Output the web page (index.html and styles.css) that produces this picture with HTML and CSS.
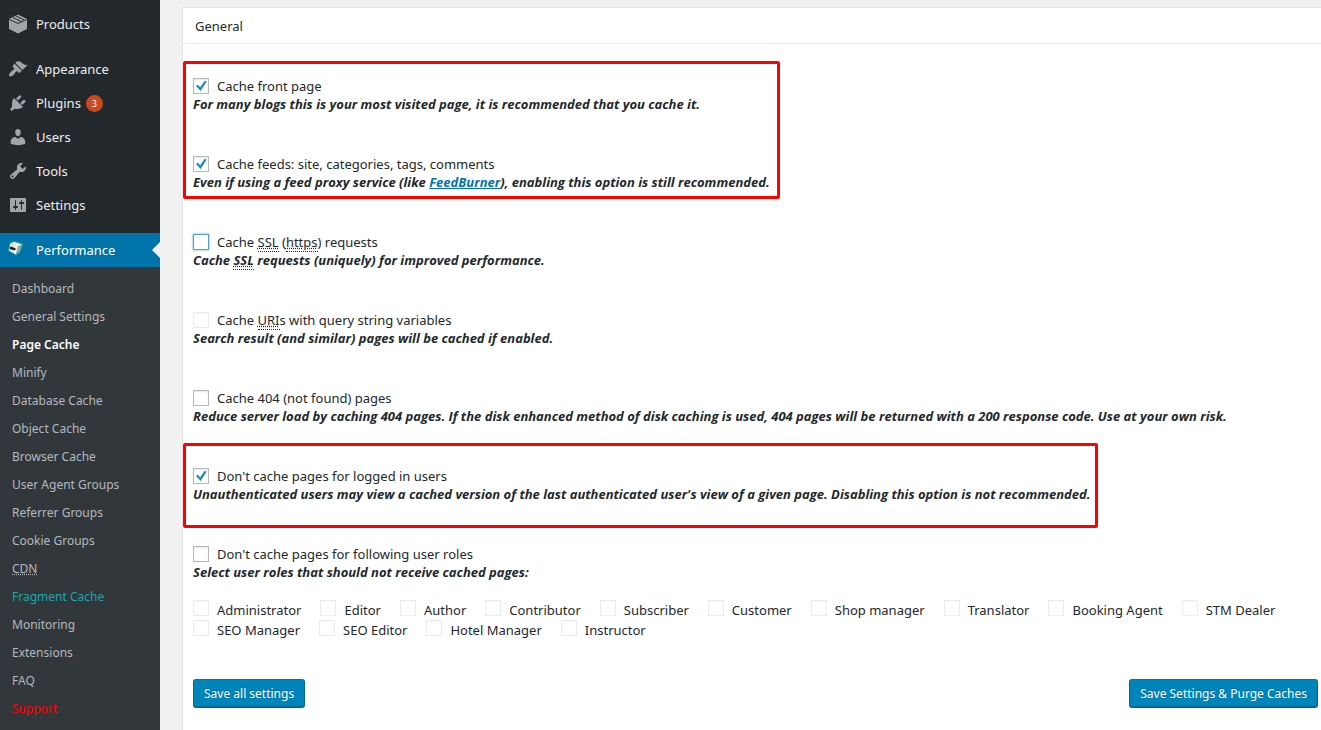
FILE: index.html
```html
<!DOCTYPE html>
<html lang="en">
<head>
<meta charset="utf-8">
<title>Page Cache</title>
<link rel="stylesheet" href="styles.css">
</head>
<body>
<div class="layout">
  <nav class="sidebar" aria-label="Main menu">
    <ul class="menu">
      <li><a class="menu-item" href="#"><svg class="icon" viewBox="0 0 20 20"><path d="M10 .5 19 5V15L10 19.500 1 15V5z"/><path class="icon-line" d="M1.500 5.500 10 9.500 18.500 5.500M5 3.500 13 7.500M8 2 16 6"/></svg>Products</a></li>
      <li class="separated"><a class="menu-item" href="#"><svg class="icon" viewBox="0 0 20 20"><path d="M14.480 11.060L7.410 3.990l1.500-1.500c.5-.56 2.300-.47 3.510.32 1.210.8 1.430 1.280 2.910 2.100 1.180.64 2.450 1.260 4.450.85zm-.71.71L6.700 4.700 4.930 6.470c-.39.39-.39 1.020 0 1.410l1.060 1.060c.39.39.39 1.030 0 1.420-.6.6-1.430 1.110-2.210 1.690-.35.26-.7.53-1.010.84C1.430 14.230.4 16.080 1.400 17.070c.99 1 2.840-.03 4.180-1.360.31-.31.58-.66.85-1.020.57-.78 1.080-1.610 1.690-2.210.39-.39 1.020-.39 1.410 0l1.060 1.060c.39.39 1.020.39 1.410 0z"/></svg>Appearance</a></li>
      <li><a class="menu-item" href="#"><svg class="icon" viewBox="0 0 20 20"><path d="M13.110 4.360L9.870 7.600 8 5.730l3.240-3.240c.35-.34 1.050-.2 1.560.32.52.51.66 1.210.31 1.550zm-8 1.770l.91-1.120 9.010 9.010-1.190.84c-.71.71-2.630 1.160-3.820 1.160H6.140L4.900 17.260c-.59.59-1.540.59-2.120 0-.59-.58-.59-1.530 0-2.120l1.240-1.240v-3.880c0-1.130.4-3.190 1.090-3.890zm7.260 3.970l3.240-3.240c.34-.35 1.040-.21 1.550.31.52.51.66 1.210.31 1.550l-3.240 3.250z"/></svg>Plugins<span class="count">3</span></a></li>
      <li><a class="menu-item" href="#"><svg class="icon" viewBox="0 0 20 20"><path d="M10 9.250c-2.270 0-2.730-3.440-2.730-3.440C7 4.020 7.820 2 9.970 2c2.160 0 2.980 2.020 2.710 3.810 0 0-.41 3.440-2.680 3.440zm0 2.570L12.720 10c2.390 0 4.520 2.330 4.520 4.530v2.490s-3.650 1.130-7.240 1.130c-3.650 0-7.240-1.130-7.240-1.130v-2.490c0-2.250 1.940-4.480 4.470-4.480z"/></svg>Users</a></li>
      <li><a class="menu-item" href="#"><svg class="icon" viewBox="0 0 20 20"><path d="M16.680 9.770c-1.340 1.340-3.300 1.670-4.950.99l-5.410 6.520c-.99.99-2.590.99-3.580 0s-.99-2.590 0-3.570l6.520-5.420c-.68-1.650-.35-3.610.99-4.950 1.280-1.280 3.120-1.620 4.720-1.060l-2.890 2.890 2.820 2.820 2.860-2.870c.53 1.580.18 3.390-1.080 4.650zM3.810 16.210c.4.39 1.040.39 1.430 0 .4-.4.4-1.040 0-1.430-.39-.4-1.030-.4-1.430 0-.39.39-.39 1.030 0 1.430z"/></svg>Tools</a></li>
      <li><a class="menu-item" href="#"><svg class="icon" viewBox="0 0 20 20"><path d="M18 16V4c0-.55-.45-1-1-1H3c-.55 0-1 .45-1 1v12c0 .55.45 1 1 1h14c.55 0 1-.45 1-1zM8 11h1c.55 0 1 .45 1 1s-.45 1-1 1H8v1.500c0 .28-.22.5-.5.5s-.5-.22-.5-.5V13H6c-.55 0-1-.45-1-1s.45-1 1-1h1V5.500c0-.28.22-.5.5-.5s.5.22.5.5V11zm5-2h-1c-.55 0-1-.45-1-1s.45-1 1-1h1V5.500c0-.28.22-.5.5-.5s.5.22.5.5V7h1c.55 0 1 .45 1 1s-.45 1-1 1h-1v5.500c0 .28-.22.5-.5.5s-.5-.22-.5-.5V9z"/></svg>Settings</a></li>
      <li class="separated"><a class="menu-item current" href="#"><svg class="logo" viewBox="0 0 20 20"><path class="logo-edge" d="M2.500 3.500 6 2 14 4.500 11.500 11.500 8 14.500 1 10.500z"/><path fill="#fff" d="M2.500 3.500 6 2 14 4.500 10 6.500z"/><path fill="#f4f4f4" d="M2.200 3.800 10 6.500 8 14.500 1 10.500z"/><path fill="#9da5a8" d="M10 6.500 14 4.500 11.500 11.500 8 14.500z"/><path class="logo-mark" d="M1.800 7.300 3 8.500 3.800 7.700 5 9.100 5.800 8.500 7.300 9.800"/></svg>Performance</a></li>
    </ul>
    <ul class="submenu">
      <li><a href="#">Dashboard</a></li>
      <li><a href="#">General Settings</a></li>
      <li><a class="active" href="#">Page Cache</a></li>
      <li><a href="#">Minify</a></li>
      <li><a href="#">Database Cache</a></li>
      <li><a href="#">Object Cache</a></li>
      <li><a href="#">Browser Cache</a></li>
      <li><a href="#">User Agent Groups</a></li>
      <li><a href="#">Referrer Groups</a></li>
      <li><a href="#">Cookie Groups</a></li>
      <li><a href="#"><abbr>CDN</abbr></a></li>
      <li><a class="teal" href="#">Fragment Cache</a></li>
      <li><a href="#">Monitoring</a></li>
      <li><a href="#">Extensions</a></li>
      <li><a href="#">FAQ</a></li>
      <li><a class="support" href="#">Support</a></li>
    </ul>
  </nav>
  <main class="content">
    <form class="panel">
      <h1 class="panel-title">General</h1>
      <div class="panel-body">
        <div class="highlight highlight-basic">
          <div class="option">
            <label><input type="checkbox" checked>Cache front page</label>
            <p>For many blogs this is your most visited page, it is recommended that you cache it.</p>
          </div>
          <div class="option">
            <label><input type="checkbox" checked>Cache feeds: site, categories, tags, comments</label>
            <p>Even if using a feed proxy service (like <a href="#">FeedBurner</a>), enabling this option is still recommended.</p>
          </div>
        </div>
        <div class="options">
          <div class="option">
            <label><input class="focused" type="checkbox"><span>Cache <abbr>SSL</abbr> (<abbr>https</abbr>) requests</span></label>
            <p>Cache <abbr>SSL</abbr> requests (uniquely) for improved performance.</p>
          </div>
          <div class="option">
            <label><input type="checkbox" disabled><span>Cache <abbr>URI</abbr>s with query string variables</span></label>
            <p>Search result (and similar) pages will be cached if enabled.</p>
          </div>
          <div class="option">
            <label><input type="checkbox">Cache 404 (not found) pages</label>
            <p>Reduce server load by caching 404 pages. If the disk enhanced method of disk caching is used, 404 pages will be returned with a 200 response code. Use at your own risk.</p>
          </div>
        </div>
        <div class="highlight highlight-users">
          <div class="option">
            <label><input type="checkbox" checked>Don't cache pages for logged in users</label>
            <p>Unauthenticated users may view a cached version of the last authenticated user's view of a given page. Disabling this option is not recommended.</p>
          </div>
        </div>
        <div class="option">
          <label><input type="checkbox">Don't cache pages for following user roles</label>
          <p>Select user roles that should not receive cached pages:</p>
        </div>
        <div class="roles">
          <label><input type="checkbox" disabled>Administrator</label>
          <label><input type="checkbox" disabled>Editor</label>
          <label><input type="checkbox" disabled>Author</label>
          <label><input type="checkbox" disabled>Contributor</label>
          <label><input type="checkbox" disabled>Subscriber</label>
          <label><input type="checkbox" disabled>Customer</label>
          <label><input type="checkbox" disabled>Shop manager</label>
          <label><input type="checkbox" disabled>Translator</label>
          <label><input type="checkbox" disabled>Booking Agent</label>
          <label><input type="checkbox" disabled>STM Dealer</label>
          <label><input type="checkbox" disabled>SEO Manager</label>
          <label><input type="checkbox" disabled>SEO Editor</label>
          <label><input type="checkbox" disabled>Hotel Manager</label>
          <label><input type="checkbox" disabled>Instructor</label>
        </div>
        <div class="actions">
          <button type="button">Save all settings</button>
          <button type="button">Save Settings &amp; Purge Caches</button>
        </div>
      </div>
    </form>
  </main>
</div>
</body>
</html>
```
FILE: styles.css
```css
* { box-sizing: border-box; }
body {
  margin: 0;
  background: #f1f1f1;
  color: #23282d;
  font: 13px/18px "Noto Sans", "Open Sans", sans-serif;
}
ul { list-style: none; margin: 0; padding: 0; }
p { margin: 0; }
.layout { display: flex; min-height: 100vh; }

.sidebar {
  flex: 0 0 160px;
  display: flex;
  flex-direction: column;
  padding-top: 7px;
  background: #23282d;
}
.separated { margin-top: 11px; }
.menu-item {
  position: relative;
  display: flex;
  align-items: center;
  height: 34px;
  padding-left: 8px;
  color: #eee;
  text-decoration: none;
}
.icon { width: 20px; height: 20px; margin-right: 8px; fill: #a0a5aa; }
.icon-line { fill: none; stroke: #23282d; stroke-width: 1; }
.logo { width: 20px; height: 20px; margin-right: 8px; overflow: visible; }
.logo-edge { fill: #0e8f96; stroke: #12a3a8; stroke-width: 2; stroke-linejoin: round; }
.logo-mark { fill: none; stroke: #222; stroke-width: 2; }
.count {
  width: 17px;
  height: 17px;
  margin-left: 5px;
  border-radius: 50%;
  background: #ca4a1f;
  color: #fff;
  font-size: 9px;
  line-height: 17px;
  text-align: center;
}
.current { background: #0073aa; color: #fff; }
.current::after {
  content: "";
  position: absolute;
  right: 0;
  top: 9px;
  border: 8px solid transparent;
  border-left: 0;
  border-right-color: #f1f1f1;
}
.submenu { flex: 1; padding: 8px 0 0; background: #32373c; }
.submenu a {
  display: block;
  padding: 0 12px;
  color: #b4b9be;
  font-size: 12px;
  line-height: 28px;
  text-decoration: none;
}
.submenu .active { color: #fff; font-weight: 600; }
.submenu .teal { color: #16a8ad; }
.submenu .support { color: #f00; }
abbr { text-decoration: underline dotted; }
.option abbr { border-bottom: 1px dotted currentColor; }

.content { flex: 1; min-width: 0; padding: 7px 0 0 22px; }
.panel {
  min-height: 100%;
  background: #fff;
  border: 1px solid #e5e5e5;
  border-width: 1px 0 0 1px;
}
.panel-title {
  margin: 0;
  padding: 9px 12px 8px;
  border-bottom: 1px solid #eee;
  font-size: 13px;
  font-weight: 400;
  line-height: 18px;
}
.panel-body { padding: 17px 3px 21px 10px; }
.option + .option { margin-top: 42px; }
.option p {
  font-family: "Open Sans", "Noto Sans", sans-serif;
  font-style: italic;
  font-weight: 700;
  white-space: nowrap;
}
.option p a { color: #0073aa; }
.option label { display: flex; align-items: center; width: fit-content; }
.highlight { margin-left: -10px; border: 3px solid #f00; border-radius: 2px; }
.highlight-basic { width: 597px; padding: 13px 7px 5px; }
.highlight-users { width: 915px; margin-top: 18px; margin-bottom: 17px; padding: 21px 7px 22px; }
.options { margin-top: 34px; }

input {
  appearance: none;
  flex: none;
  width: 16px;
  height: 16px;
  margin: 0 8px 0 0;
  border: 1px solid #b4b9be;
  background: #fff;
  box-shadow: inset 0 1px 2px rgba(0, 0, 0, .1);
}
input:checked {
  background: url("data:image/svg+xml,%3Csvg xmlns='http://www.w3.org/2000/svg' viewBox='0 0 14 14'%3E%3Cpath d='M1.800 6.800 4 5.700 6.100 8.300 10.500 2 12.800 2.500 6.600 12z' fill='%231e8cbe'/%3E%3C/svg%3E") center / 14px 14px;
}
input:disabled { border-color: #ececed; box-shadow: inset 0 1px 2px rgba(0, 0, 0, .03); }
.focused { border-color: #5b9dd9; box-shadow: 0 0 2px rgba(30, 140, 190, .8); }

.roles { display: flex; flex-wrap: wrap; margin-top: 19px; column-gap: 19px; }
.roles label { display: flex; line-height: 20px; }

.actions { display: flex; justify-content: space-between; margin-top: 39px; }
button {
  height: 29px;
  padding: 1px 10px 0;
  border: 1px solid #006799;
  border-top-color: #0073aa;
  border-bottom-width: 2px;
  border-radius: 3px;
  background: #0085ba;
  color: #fff;
  font: 12px/25px "Noto Sans", "Open Sans", sans-serif;
  text-shadow: 0 -1px 1px #006799;
}
```
